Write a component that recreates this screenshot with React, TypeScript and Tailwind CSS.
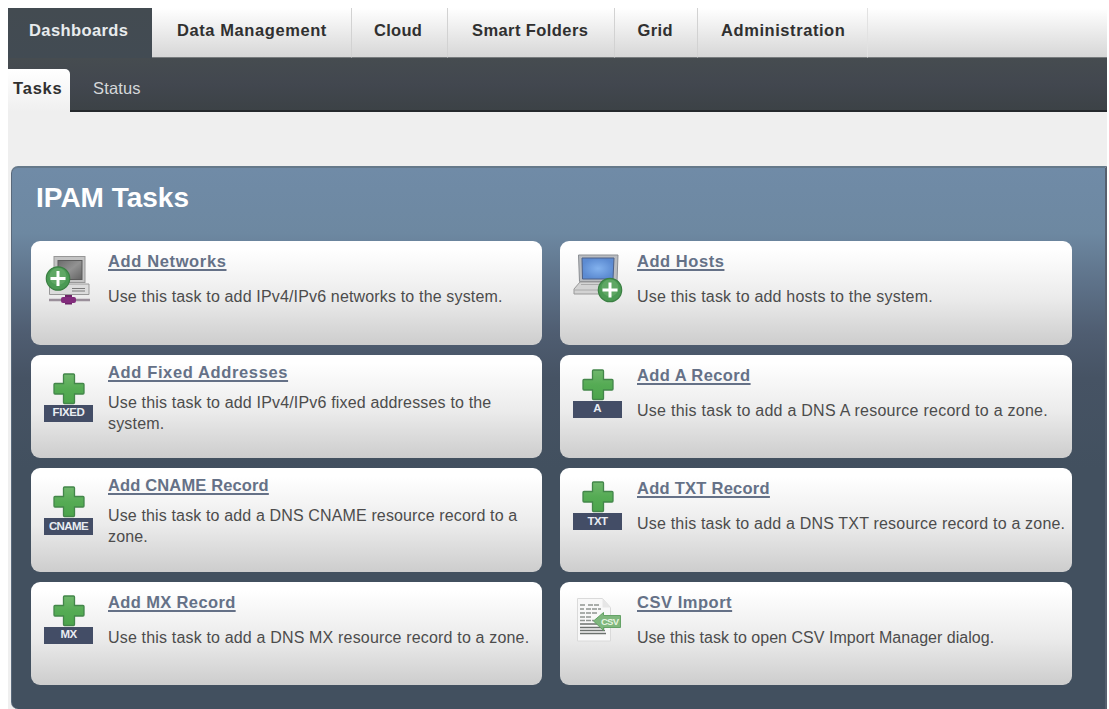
import type { ReactNode } from "react";

const FONT = "font-['Liberation_Sans',Arial,sans-serif]";

function PlusBadge({ cx, cy }: { cx: number; cy: number }) {
  return (
    <g>
      <circle cx={cx} cy={cy} r="11.7" fill="#4b9a54" stroke="#3a7f42" strokeWidth="1.2" />
      <circle cx={cx} cy={cy - 2} r="8.5" fill="#6cb070" opacity="0.6" />
      <path d={`M${cx - 7.5} ${cy}h15M${cx} ${cy - 7.5}v15`} stroke="#fff" strokeWidth="3" />
    </g>
  );
}

function NetworkIcon() {
  return (
    <svg width="48" height="52" viewBox="0 0 48 52">
      <defs>
        <linearGradient id="crt" x1="0" y1="0" x2="1" y2="1">
          <stop offset="0" stopColor="#6b6b6b" />
          <stop offset="0.5" stopColor="#929292" />
          <stop offset="1" stopColor="#626262" />
        </linearGradient>
      </defs>
      <rect x="10" y="2.500" width="31" height="26" fill="#c4c4c4" stroke="#979797" />
      <rect x="14" y="6.500" width="24" height="19" fill="url(#crt)" stroke="#5b5b5b" />
      <path d="M5.500 33h5v-3h34.500v10.500h-39.500z" fill="#dcdcdc" stroke="#999" />
      <path d="M28 34.500h13M28 37h13" stroke="#7a7a7a" strokeWidth="1.200" />
      <path d="M5 46h41" stroke="#9a8f9a" strokeWidth="2.600" />
      <rect x="17" y="43" width="15" height="6" rx="2" fill="#822c7c" />
      <path d="M21 43h7v-2h-7zM21 49h7v1.500h-7z" fill="#6d2468" />
      <PlusBadge cx={14} cy={24.500} />
    </svg>
  );
}

function HostIcon() {
  return (
    <svg width="50" height="52" viewBox="0 0 50 52">
      <defs>
        <radialGradient id="lcd">
          <stop offset="0" stopColor="#83b2ee" />
          <stop offset="1" stopColor="#5c8bd2" />
        </radialGradient>
      </defs>
      <path d="M5.500 2h39.500l-1 26.500h-37.500z" fill="#b9bcc0" stroke="#8b8e93" />
      <path d="M9 5h32l-1 21h-30.500z" fill="url(#lcd)" stroke="#4c6088" />
      <path d="M7 29h33l4 6v6h-43v-5z" fill="#d3d3d3" stroke="#999" />
      <path d="M8 31.500h25M1 37h30" stroke="#aaa" />
      <PlusBadge cx={37} cy={37} />
    </svg>
  );
}

function RecordIcon({ label, tracking }: { label: string; tracking: string }) {
  return (
    <div className="flex w-[49px] flex-col items-center">
      <svg width="32" height="32" viewBox="0 0 32 32">
        <defs>
          <linearGradient id="plusFill" x1="0" y1="0" x2="0" y2="1">
            <stop offset="0" stopColor="#70b76d" />
            <stop offset="0.5" stopColor="#55ab54" />
            <stop offset="1" stopColor="#4ca44c" />
          </linearGradient>
        </defs>
        <path
          d="M11.500 1h9q1 0 1 1v8.500h8.500q1 0 1 1v8.500q0 1-1 1h-8.500v8.500q0 1-1 1h-9q-1 0-1-1v-8.500h-8.500q-1 0-1-1v-8.500q0-1 1-1h8.500v-8.500q0-1 1-1z"
          fill="url(#plusFill)"
          stroke="#43864a"
          strokeWidth="1.300"
        />
      </svg>
      <div className="flex h-[17px] w-full items-center justify-center bg-[#434d66]">
        <span className={`text-[11.500px] leading-none font-bold text-[#e9ecf2] ${tracking}`}>{label}</span>
      </div>
    </div>
  );
}

function CsvIcon() {
  return (
    <svg width="48" height="48" viewBox="0 0 48 48">
      <path d="M1.500 2.500h25l8 9v33.500h-33z" fill="#f8f8f8" stroke="#dadada" />
      <path d="M26.500 2.500v9h8z" fill="#e6e6e6" />
      <path d="M4 9h5M12 9h12M4 13h4M10 13h15M4 17h17M4 21h12M4 24.500h14" stroke="#8f9490" strokeWidth="1.400" strokeDasharray="5 1" />
      <path d="M4 28h21M4 31.500h25M4 34.500h25M4 37.500h26" stroke="#6c716e" strokeWidth="1.300" />
      <path d="M17.500 25l10-8.500v3h17v12h-17v3z" fill="#7fb77d" stroke="#64a266" />
      <text x="25" y="29" fontSize="9.500" fontWeight="700" fill="#e6f5e0" textLength="18" fontFamily="Liberation Sans, sans-serif">
        CSV
      </text>
    </svg>
  );
}

type Task = {
  title: string;
  titleClass: string;
  lines: string[];
  lineClass: string;
  icon: ReactNode;
  iconClass: string;
  textClass: string;
};

const tasks: Task[] = [
  {
    title: "Add Networks", titleClass: "tracking-[0.63px]",
    lines: ["Use this task to add IPv4/IPv6 networks to the system."], lineClass: "tracking-[0.16px]",
    icon: <NetworkIcon />, iconClass: "pt-[13px]", textClass: "pt-[10px] gap-[15px]",
  },
  {
    title: "Add Hosts", titleClass: "tracking-[0.55px]",
    lines: ["Use this task to add hosts to the system."], lineClass: "tracking-[0.21px]",
    icon: <HostIcon />, iconClass: "pt-[12px]", textClass: "pt-[10px] gap-[15px]",
  },
  {
    title: "Add Fixed Addresses", titleClass: "tracking-[0.63px]",
    lines: ["Use this task to add IPv4/IPv6 fixed addresses to the", "system."], lineClass: "tracking-[0.17px]",
    icon: <RecordIcon label="FIXED" tracking="tracking-[-0.4px]" />, iconClass: "pt-[18px]", textClass: "pt-[7px] gap-[10px]",
  },
  {
    title: "Add A Record", titleClass: "tracking-[0.4px]",
    lines: ["Use this task to add a DNS A resource record to a zone."], lineClass: "tracking-[0.26px]",
    icon: <RecordIcon label="A" tracking="tracking-normal" />, iconClass: "pt-[14px]", textClass: "pt-[10px] gap-[15px]",
  },
  {
    title: "Add CNAME Record", titleClass: "tracking-[0.14px]",
    lines: ["Use this task to add a DNS CNAME resource record to a", "zone."], lineClass: "tracking-[0.14px]",
    icon: <RecordIcon label="CNAME" tracking="tracking-[-0.6px]" />, iconClass: "pt-[18px]", textClass: "pt-[7px] gap-[10px]",
  },
  {
    title: "Add TXT Record", titleClass: "tracking-[0.26px]",
    lines: ["Use this task to add a DNS TXT resource record to a zone."], lineClass: "tracking-[0.19px]",
    icon: <RecordIcon label="TXT" tracking="tracking-[-0.6px]" />, iconClass: "pt-[13px]", textClass: "pt-[10px] gap-[15px]",
  },
  {
    title: "Add MX Record", titleClass: "tracking-[0.37px]",
    lines: ["Use this task to add a DNS MX resource record to a zone."], lineClass: "tracking-[0.17px]",
    icon: <RecordIcon label="MX" tracking="tracking-[-0.6px]" />, iconClass: "pt-[13px]", textClass: "pt-[10px] gap-[15px]",
  },
  {
    title: "CSV Import", titleClass: "tracking-[0.53px]",
    lines: ["Use this task to open CSV Import Manager dialog."], lineClass: "tracking-[0.03px]",
    icon: <CsvIcon />, iconClass: "pt-[14px] pl-[3px]", textClass: "pt-[10px] gap-[15px]",
  },
];

function TaskCard({ task }: { task: Task }) {
  return (
    <article className="flex h-[103.500px] rounded-[9px] bg-linear-to-b from-white from-8% via-[#ebebeb] via-55% to-[#cdcdcd] pl-[13px]">
      <div className={`w-[64px] shrink-0 ${task.iconClass}`}>{task.icon}</div>
      <div className={`flex flex-col items-start whitespace-nowrap ${task.textClass}`}>
        <a
          href="#"
          className={`text-[16.500px] leading-5 font-bold text-[#657187] underline decoration-[1.500px] underline-offset-[2px] [text-decoration-skip-ink:none] ${task.titleClass}`}
        >
          {task.title}
        </a>
        <div className={`text-[16px] leading-[21px] text-[#4c4c4c] ${task.lineClass}`}>
          {task.lines.map((line) => (
            <p key={line}>{line}</p>
          ))}
        </div>
      </div>
    </article>
  );
}

const tabs = [
  { label: "Data Management", box: "w-[200px] pl-[25px] border-r-[#d2d2d2]", text: "tracking-[0.58px]" },
  { label: "Cloud", box: "w-[96px] pl-[22px] border-r-[#d2d2d2]", text: "tracking-[0.3px]" },
  { label: "Smart Folders", box: "w-[166.500px] pl-[24px] border-r-[#d2d2d2]", text: "tracking-[0.42px]" },
  { label: "Grid", box: "w-[83.500px] pl-[23px] border-r-[#d2d2d2]", text: "tracking-[0.35px]" },
  { label: "Administration", box: "w-[170px] pl-[23px] border-r-[#e2e2e2]", text: "tracking-[0.57px]" },
];

export default function App() {
  return (
    <div className={`h-[709px] w-[1109px] overflow-hidden bg-white pt-2 pl-2 ${FONT}`}>
      <div className="h-[701px] w-[1098.500px] bg-[#efefef]">
        <nav className="flex h-[50px] bg-linear-to-b from-white to-[#d6d6d6] text-[16.500px] font-bold text-[#303030]">
          <div className="flex h-full w-[144px] items-start bg-linear-to-b from-[#434b51] to-[#424b53] pt-[12px] pl-[21px] leading-[21px] text-[#e8ebed]">
            <span className="tracking-[0.4px]">Dashboards</span>
          </div>
          {tabs.map((tab) => (
            <div
              key={tab.label}
              className={`h-full border-r border-b border-b-[#777b7d] pt-[12px] leading-[21px] whitespace-nowrap ${tab.box}`}
            >
              <span className={tab.text}>{tab.label}</span>
            </div>
          ))}
          <div className="flex-1 border-b border-[#777b7d]" />
        </nav>
        <div className="flex h-[54px] items-end border-b-2 border-[#25292d] bg-linear-to-b from-[#464c50] via-[#42474f] to-[#3c4246] text-[16.500px]">
          <div className="-mb-[2px] h-[43px] w-[62px] rounded-tr-[5px] bg-linear-to-b from-white to-[#efefef] pt-[9px] pl-[5px] leading-[20px] font-bold text-[#303030]">
            <span className="tracking-[0.8px]">Tasks</span>
          </div>
          <div className="h-[41px] pt-[9px] pl-[23px] leading-[20px] text-[#d5d8da]">
            <span className="tracking-[0.15px]">Status</span>
          </div>
        </div>
        <div className="h-[54px]" />
        <section className="ml-[3px] h-[543px] rounded-tl-[7px] rounded-bl-[7px] border-t-2 border-r-2 border-l border-t-[#65798a] border-r-[#56606f] border-l-[#59697b] bg-[linear-gradient(to_bottom,#708ba7_0px,#6d88a1_65px,#627890_100px,#4f5d71_165px,#465364_210px,#42505f_300px,#42505f_100%)] pl-[19px]">
          <h1 className="h-[73px] pt-[14px] pl-[5px] text-[28px] leading-[32px] font-bold text-white">IPAM Tasks</h1>
          <div className="grid grid-cols-[511px_511.500px] gap-x-[18px] gap-y-[10px]">
            {tasks.map((task) => (
              <TaskCard key={task.title} task={task} />
            ))}
          </div>
        </section>
      </div>
    </div>
  );
}
